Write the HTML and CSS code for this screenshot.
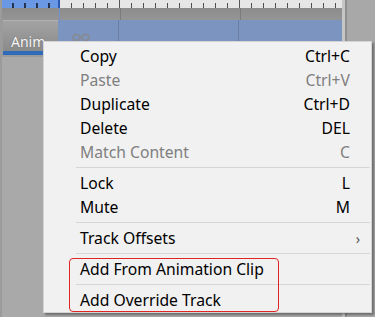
FILE: index.html
```html
<!doctype html>
<html lang="en">
<head>
  <meta charset="utf-8">
  <title>Timeline track menu</title>
  <link rel="stylesheet" href="styles.css">
</head>
<body>

<div class="window">
  <div class="timeline">
    <div class="ruler">
      <div class="ruler-sel"></div>
      <div class="ruler-rest"></div>
    </div>
    <div class="band"></div>
    <div class="track">
      <div class="track-head">
        <div class="track-btn">Anim</div>
      </div>
      <div class="track-body">
        <svg class="loop" width="18" height="9" viewBox="0 0 18 9">
          <ellipse cx="4.5" cy="4.5" rx="3.5" ry="3" fill="none" stroke="#868b98" stroke-width="2"/>
          <ellipse cx="13.5" cy="4.5" rx="3.5" ry="3" fill="none" stroke="#868b98" stroke-width="2"/>
        </svg>
      </div>
    </div>
    <div class="below"></div>
  </div>
  <div class="gutter"></div>

  <div class="menu">
    <div class="item"><span>Copy</span><span>Ctrl+C</span></div>
    <div class="item off"><span>Paste</span><span>Ctrl+V</span></div>
    <div class="item"><span>Duplicate</span><span>Ctrl+D</span></div>
    <div class="item"><span>Delete</span><span>DEL</span></div>
    <div class="item off"><span>Match Content</span><span>C</span></div>
    <div class="sep"></div>
    <div class="item"><span>Lock</span><span>L</span></div>
    <div class="item"><span>Mute</span><span>M</span></div>
    <div class="sep"></div>
    <div class="item"><span>Track Offsets</span><span class="arrow">›</span></div>
    <div class="sep"></div>
    <div class="item"><span>Add From Animation Clip</span></div>
    <div class="sep"></div>
    <div class="item"><span>Add Override Track</span></div>
    <div class="mark"></div>
  </div>
</div>

</body>
</html>
```

FILE: styles.css
```css
* {
  box-sizing: border-box;
}
body {
  margin: 0;
  width: 375px;
  height: 317px;
  overflow: hidden;
  font-family: "Noto Sans", sans-serif;
  background: #a9a9a9;
}
.window {
  position: relative;
  display: flex;
  height: 317px;
}
.timeline {
  width: 342px;
  display: flex;
  flex-direction: column;
  background: #a9a9a9;
  border-left: 2px solid #9b9b9b;
}
.ruler {
  height: 8px;
  display: flex;
}
.ruler-sel {
  width: 58px;
  background-color: #6b98e4;
  background-image: linear-gradient(to right, transparent 10px, #25324d 10px 12px);
  background-size: 12px 5px;
  background-position: 0 bottom;
  background-repeat: repeat-x;
  border-right: 2px solid #2c58b0;
}
.ruler-rest {
  flex: 1;
  background-color: #e6e6e6;
  background-image:
    linear-gradient(to right, transparent 59px, #555 59px 60px, transparent 60px 179px, #555 179px 180px, transparent 180px),
    linear-gradient(to right, transparent 11px, #505050 11px 12px);
  background-size: 100% 100%, 12px 5px;
  background-position: 0 0, 0 bottom;
  background-repeat: no-repeat, repeat-x;
}
.band {
  height: 12px;
  background:
    linear-gradient(to right, transparent 57px, #6f8fd0 57px 58px, transparent 58px 118px, #7a7a7a 118px 119px, transparent 119px 238px, #7a7a7a 238px 239px, transparent 239px),
    linear-gradient(#8c8c8c, #959595);
}
.track {
  height: 37px;
  display: flex;
}
.track-head {
  width: 56px;
  padding: 0 0 2px 1px;
  background: #9a9a9a;
}
.track-btn {
  height: 35px;
  padding: 11px 0 0 8px;
  font-size: 14px;
  color: #fafafa;
  text-shadow: 0 0 1px #555;
  background: linear-gradient(#a3a3a3, #8a8a8a);
  border-top: 1px solid #b0b0b0;
  border-bottom: 4px solid #2f6bb8;
}
.track-body {
  flex: 1;
  padding: 13px 0 0 14px;
  background:
    linear-gradient(to right, transparent 60px, #6a7ea3 60px 61px, transparent 61px 180px, #6a7ea3 180px 181px, transparent 181px),
    #7b94c0;
}
.loop {
  display: block;
}
.below {
  flex: 1;
}
.gutter {
  flex: 1;
  background:
    linear-gradient(to right, #c6c6c6 0 3px, #8f8f8f 3px 5px, #a8a8a8 5px);
}
.menu {
  position: absolute;
  left: 43px;
  top: 41px;
  width: 329px;
  height: 272px;
  padding-top: 2px;
  background: #f1f1f1;
  border: 1px solid #d4d4d4;
  box-shadow: 2px 2px 2px rgba(0, 0, 0, 0.35);
  font-size: 15.7px;
  color: #000;
}
.item {
  height: 24px;
  display: flex;
  align-items: center;
  justify-content: space-between;
  padding: 0 21px 0 36px;
}
.item.off {
  color: #7f7f7f;
}
.arrow {
  margin-right: -10px;
  font-size: 14px;
  color: #555;
}
.sep {
  height: 1px;
  margin: 3px 1px 3px 32px;
  background: #d6d6d6;
}
.mark {
  position: absolute;
  left: 25px;
  top: 216px;
  width: 210px;
  height: 54px;
  border: 1px solid #e02424;
  border-radius: 4px;
}
```
